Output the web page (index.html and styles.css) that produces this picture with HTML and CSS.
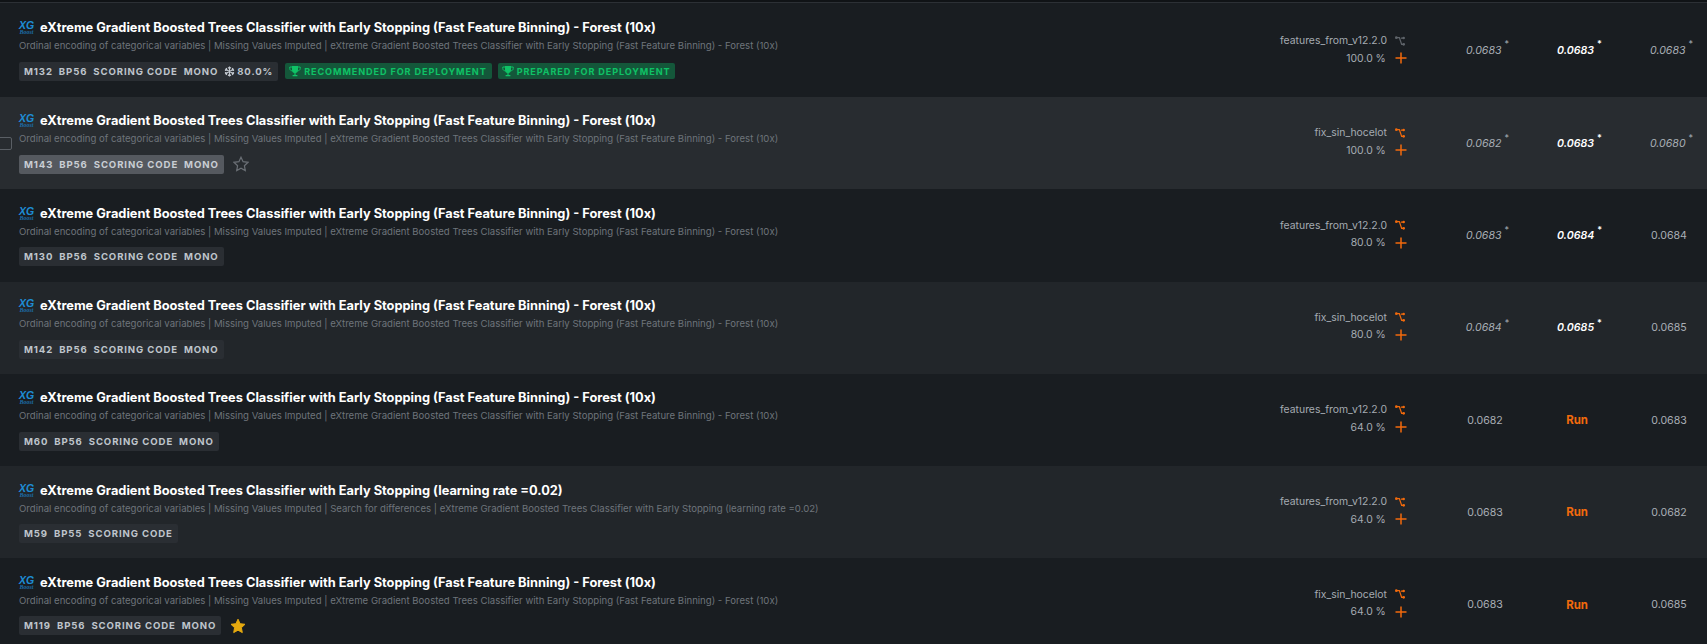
FILE: index.html
```html
<!DOCTYPE html>
<html lang="en">
<head>
<meta charset="utf-8">
<title>Leaderboard</title>
<link rel="stylesheet" href="styles.css">
</head>
<body>
<svg class="defs" width="0" height="0" aria-hidden="true">
  <symbol id="branch" viewBox="0 0 12 12">
    <circle cx="1.6" cy="2" r="1.6" fill="currentColor"/>
    <circle cx="10.4" cy="2.4" r="1.5" fill="currentColor"/>
    <circle cx="10.4" cy="10" r="1.6" fill="currentColor"/>
    <path d="M1.5 2H5.2L8 10H10.5M7 2.4H10.5" fill="none" stroke="currentColor" stroke-width="1.5"/>
  </symbol>
  <symbol id="plus" viewBox="0 0 12 12">
    <path d="M6 .5V11.5M.5 6H11.5" fill="none" stroke="currentColor" stroke-width="1.5"/>
  </symbol>
  <symbol id="trophy" viewBox="0 0 12 12">
    <path d="M3 1H9V5.2C9 6.9 7.7 7.8 6.6 8V10H8.4V11.2H3.6V10H5.4V8C4.3 7.8 3 6.9 3 5.2Z" fill="currentColor"/>
    <path d="M3 2H.8V3.6C.8 5 2 5.8 3.4 5.8M9 2H11.2V3.6C11.2 5 10 5.8 8.6 5.8" fill="none" stroke="currentColor" stroke-width="1"/>
  </symbol>
  <symbol id="flake" viewBox="0 0 12 12">
    <path d="M6 .5V11.5M1.2 3.2L10.8 8.8M10.8 3.2L1.2 8.8M4.4 1.4L6 3L7.6 1.4M4.4 10.6L6 9L7.6 10.6M1 5L3.2 4.4L2.6 2.2M11 5L8.8 4.4L9.4 2.2M1 7L3.2 7.6L2.6 9.8M11 7L8.8 7.6L9.4 9.8" fill="none" stroke="currentColor" stroke-width="1.2"/>
  </symbol>
  <symbol id="star" viewBox="0 0 16 16">
    <path d="M8 1.2L10.1 5.7L15 6.3L11.4 9.7L12.3 14.6L8 12.2L3.7 14.6L4.6 9.7L1 6.3L5.9 5.7Z"/>
  </symbol>
</svg>

<main class="board">
  <div class="topline"></div>

  <section class="row row-first">
    <div class="model">
      <div class="title-line">
        <span class="logo"><span class="logo-xg">XG</span><span class="logo-boost">Boost</span></span>
        <h2 class="title">eXtreme Gradient Boosted Trees Classifier with Early Stopping (Fast Feature Binning) - Forest (10x)</h2>
      </div>
      <p class="desc">Ordinal encoding of categorical variables | Missing Values Imputed | eXtreme Gradient Boosted Trees Classifier with Early Stopping (Fast Feature Binning) - Forest (10x)</p>
      <div class="tags">
        <span class="badges"><span>M132</span><span>BP56</span><span>SCORING CODE</span><span>MONO</span><span class="frozen"><svg class="flake"><use href="#flake"/></svg>80.0%</span></span>
        <span class="pill pill-first"><svg class="trophy"><use href="#trophy"/></svg>RECOMMENDED FOR DEPLOYMENT</span>
        <span class="pill"><svg class="trophy"><use href="#trophy"/></svg>PREPARED FOR DEPLOYMENT</span>
      </div>
    </div>
    <div class="feature">
      <div class="feature-line"><span>features_from_v12.2.0</span><svg class="branch branch-muted"><use href="#branch"/></svg></div>
      <div class="feature-line"><span class="pct">100.0 %</span><svg class="plus"><use href="#plus"/></svg></div>
    </div>
    <div class="metric est">0.0683<sup>*</sup></div>
    <div class="metric est strong">0.0683<sup>*</sup></div>
    <div class="metric est">0.0683<sup>*</sup></div>
  </section>

  <section class="row row-hover">
    <span class="checkbox"></span>
    <div class="model">
      <div class="title-line">
        <span class="logo"><span class="logo-xg">XG</span><span class="logo-boost">Boost</span></span>
        <h2 class="title">eXtreme Gradient Boosted Trees Classifier with Early Stopping (Fast Feature Binning) - Forest (10x)</h2>
      </div>
      <p class="desc">Ordinal encoding of categorical variables | Missing Values Imputed | eXtreme Gradient Boosted Trees Classifier with Early Stopping (Fast Feature Binning) - Forest (10x)</p>
      <div class="tags">
        <span class="badges badges-hover"><span>M143</span><span>BP56</span><span>SCORING CODE</span><span>MONO</span></span>
        <svg class="star star-empty"><use href="#star"/></svg>
      </div>
    </div>
    <div class="feature">
      <div class="feature-line"><span>fix_sin_hocelot</span><svg class="branch"><use href="#branch"/></svg></div>
      <div class="feature-line"><span class="pct">100.0 %</span><svg class="plus"><use href="#plus"/></svg></div>
    </div>
    <div class="metric est">0.0682<sup>*</sup></div>
    <div class="metric est strong">0.0683<sup>*</sup></div>
    <div class="metric est">0.0680<sup>*</sup></div>
  </section>

  <section class="row">
    <div class="model">
      <div class="title-line">
        <span class="logo"><span class="logo-xg">XG</span><span class="logo-boost">Boost</span></span>
        <h2 class="title">eXtreme Gradient Boosted Trees Classifier with Early Stopping (Fast Feature Binning) - Forest (10x)</h2>
      </div>
      <p class="desc">Ordinal encoding of categorical variables | Missing Values Imputed | eXtreme Gradient Boosted Trees Classifier with Early Stopping (Fast Feature Binning) - Forest (10x)</p>
      <div class="tags">
        <span class="badges"><span>M130</span><span>BP56</span><span>SCORING CODE</span><span>MONO</span></span>
      </div>
    </div>
    <div class="feature">
      <div class="feature-line"><span>features_from_v12.2.0</span><svg class="branch"><use href="#branch"/></svg></div>
      <div class="feature-line"><span class="pct">80.0 %</span><svg class="plus"><use href="#plus"/></svg></div>
    </div>
    <div class="metric est">0.0683<sup>*</sup></div>
    <div class="metric est strong">0.0684<sup>*</sup></div>
    <div class="metric">0.0684</div>
  </section>

  <section class="row row-alt">
    <div class="model">
      <div class="title-line">
        <span class="logo"><span class="logo-xg">XG</span><span class="logo-boost">Boost</span></span>
        <h2 class="title">eXtreme Gradient Boosted Trees Classifier with Early Stopping (Fast Feature Binning) - Forest (10x)</h2>
      </div>
      <p class="desc">Ordinal encoding of categorical variables | Missing Values Imputed | eXtreme Gradient Boosted Trees Classifier with Early Stopping (Fast Feature Binning) - Forest (10x)</p>
      <div class="tags">
        <span class="badges"><span>M142</span><span>BP56</span><span>SCORING CODE</span><span>MONO</span></span>
      </div>
    </div>
    <div class="feature">
      <div class="feature-line"><span>fix_sin_hocelot</span><svg class="branch"><use href="#branch"/></svg></div>
      <div class="feature-line"><span class="pct">80.0 %</span><svg class="plus"><use href="#plus"/></svg></div>
    </div>
    <div class="metric est">0.0684<sup>*</sup></div>
    <div class="metric est strong">0.0685<sup>*</sup></div>
    <div class="metric">0.0685</div>
  </section>

  <section class="row">
    <div class="model">
      <div class="title-line">
        <span class="logo"><span class="logo-xg">XG</span><span class="logo-boost">Boost</span></span>
        <h2 class="title">eXtreme Gradient Boosted Trees Classifier with Early Stopping (Fast Feature Binning) - Forest (10x)</h2>
      </div>
      <p class="desc">Ordinal encoding of categorical variables | Missing Values Imputed | eXtreme Gradient Boosted Trees Classifier with Early Stopping (Fast Feature Binning) - Forest (10x)</p>
      <div class="tags">
        <span class="badges"><span>M60</span><span>BP56</span><span>SCORING CODE</span><span>MONO</span></span>
      </div>
    </div>
    <div class="feature">
      <div class="feature-line"><span>features_from_v12.2.0</span><svg class="branch"><use href="#branch"/></svg></div>
      <div class="feature-line"><span class="pct">64.0 %</span><svg class="plus"><use href="#plus"/></svg></div>
    </div>
    <div class="metric">0.0682</div>
    <div class="metric run">Run</div>
    <div class="metric">0.0683</div>
  </section>

  <section class="row row-alt">
    <div class="model">
      <div class="title-line">
        <span class="logo"><span class="logo-xg">XG</span><span class="logo-boost">Boost</span></span>
        <h2 class="title">eXtreme Gradient Boosted Trees Classifier with Early Stopping (learning rate =0.02)</h2>
      </div>
      <p class="desc">Ordinal encoding of categorical variables | Missing Values Imputed | Search for differences | eXtreme Gradient Boosted Trees Classifier with Early Stopping (learning rate =0.02)</p>
      <div class="tags">
        <span class="badges"><span>M59</span><span>BP55</span><span>SCORING CODE</span></span>
      </div>
    </div>
    <div class="feature">
      <div class="feature-line"><span>features_from_v12.2.0</span><svg class="branch"><use href="#branch"/></svg></div>
      <div class="feature-line"><span class="pct">64.0 %</span><svg class="plus"><use href="#plus"/></svg></div>
    </div>
    <div class="metric">0.0683</div>
    <div class="metric run">Run</div>
    <div class="metric">0.0682</div>
  </section>

  <section class="row">
    <div class="model">
      <div class="title-line">
        <span class="logo"><span class="logo-xg">XG</span><span class="logo-boost">Boost</span></span>
        <h2 class="title">eXtreme Gradient Boosted Trees Classifier with Early Stopping (Fast Feature Binning) - Forest (10x)</h2>
      </div>
      <p class="desc">Ordinal encoding of categorical variables | Missing Values Imputed | eXtreme Gradient Boosted Trees Classifier with Early Stopping (Fast Feature Binning) - Forest (10x)</p>
      <div class="tags">
        <span class="badges"><span>M119</span><span>BP56</span><span>SCORING CODE</span><span>MONO</span></span>
        <svg class="star star-full"><use href="#star"/></svg>
      </div>
    </div>
    <div class="feature">
      <div class="feature-line"><span>fix_sin_hocelot</span><svg class="branch"><use href="#branch"/></svg></div>
      <div class="feature-line"><span class="pct">64.0 %</span><svg class="plus"><use href="#plus"/></svg></div>
    </div>
    <div class="metric">0.0683</div>
    <div class="metric run">Run</div>
    <div class="metric">0.0685</div>
  </section>
</main>
</body>
</html>
```

FILE: styles.css
```css
* { box-sizing: border-box; }

html, body {
  margin: 0;
  height: 644px;
  overflow: hidden;
  background: #191d21;
}

body {
  font-family: Inter, "Liberation Sans", sans-serif;
  color: #b4bac1;
}

.defs { display: block; height: 0; }

.board { width: 1715px; }

.topline {
  height: 3px;
  background: #101316;
  border-bottom: 1px solid #2c3035;
}

.row {
  position: relative;
  display: grid;
  grid-template-columns: 1fr 276px 92px 92px 92px;
  height: 92.3px;
  background: #191d21;
}

.row-first { height: 94px; }
.row-hover { background: #282c30; }
.row-alt { background: #22262a; }

.checkbox {
  position: absolute;
  left: -6px;
  top: 40px;
  width: 18px;
  height: 13px;
  border: 1px solid #5a5f65;
  border-radius: 2px;
}

.model {
  padding: 14.4px 0 0 19px;
  min-width: 0;
}

.row-first .model { padding-top: 15px; }

.title-line {
  display: flex;
  align-items: center;
  height: 20px;
  gap: 6px;
}

.logo {
  display: flex;
  flex-direction: column;
  align-items: center;
  width: 15px;
  color: #1e8ed6;
  font-family: "Liberation Sans", sans-serif;
  font-style: italic;
  font-weight: 700;
}

.logo-xg {
  font-size: 10.5px;
  line-height: 9px;
}

.logo-boost {
  font-family: "Liberation Serif", serif;
  font-size: 6px;
  line-height: 5px;
  color: #1c6fa8;
}

.title {
  margin: 0;
  font-size: 12.8px;
  font-weight: 700;
  line-height: 20px;
  color: #fff;
  white-space: nowrap;
}

.desc {
  margin: 0;
  font-size: 9.6px;
  line-height: 15px;
  color: #6e747b;
  white-space: nowrap;
}

.tags {
  display: flex;
  align-items: center;
  margin-top: 8.6px;
  height: 19px;
}

.badges {
  display: inline-flex;
  align-items: center;
  gap: 6px;
  height: 19px;
  padding: 0 5px;
  border-radius: 2px;
  background: #2a2e33;
  color: #bfc5cc;
  font-size: 9.6px;
  font-weight: 700;
  letter-spacing: .88px;
  white-space: nowrap;
}

.badges-hover { background: #55595f; color: #c9ced4; }

.frozen {
  display: inline-flex;
  align-items: center;
  gap: 2px;
}

.flake {
  width: 11px;
  height: 11px;
  color: #c3c9d0;
}

.pill {
  display: inline-flex;
  align-items: center;
  gap: 3px;
  height: 16px;
  margin-left: 6px;
  padding: 0 5px 0 4px;
  border-radius: 2px;
  background: #14573a;
  color: #0fc266;
  font-size: 9.1px;
  font-weight: 700;
  letter-spacing: .9px;
  white-space: nowrap;
}

.pill-first { margin-left: 7px; }

.trophy { width: 12px; height: 12px; }

.star {
  width: 16px;
  height: 16px;
  margin-left: 9px;
}

.star-empty {
  fill: none;
  stroke: #6a6f75;
  stroke-width: 1.2;
}

.star-full {
  fill: #e5a90f;
  stroke: #e5a90f;
}

.feature {
  padding-top: 27px;
  font-size: 10.4px;
  color: #a5abb2;
  display: flex;
  flex-direction: column;
  align-items: flex-end;
  padding-right: 32px;
}

.row-first .feature { padding-top: 29px; }

.feature-line {
  display: flex;
  align-items: center;
  justify-content: flex-end;
  height: 17.5px;
  width: 100%;
}

.branch {
  width: 10px;
  height: 10px;
  margin-left: 8px;
  margin-right: 2px;
  color: #f26a0c;
}

.branch-muted { color: #5f646a; }

.plus {
  width: 12px;
  height: 12px;
  margin-left: 9.2px;
  color: #f26a0c;
}

.metric {
  display: flex;
  align-items: center;
  justify-content: center;
  font-size: 10.6px;
  color: #a9afb6;
}

.est {
  font-style: italic;
  padding-left: 5px;
}

.est sup {
  font-size: 9px;
  line-height: 1;
  margin-left: 3px;
  align-self: flex-start;
  margin-top: 36px;
  font-style: normal;
}

.strong {
  color: #fff;
  font-weight: 600;
}

.run {
  color: #f26a0c;
  font-size: 11.4px;
  font-weight: 700;
}
```
